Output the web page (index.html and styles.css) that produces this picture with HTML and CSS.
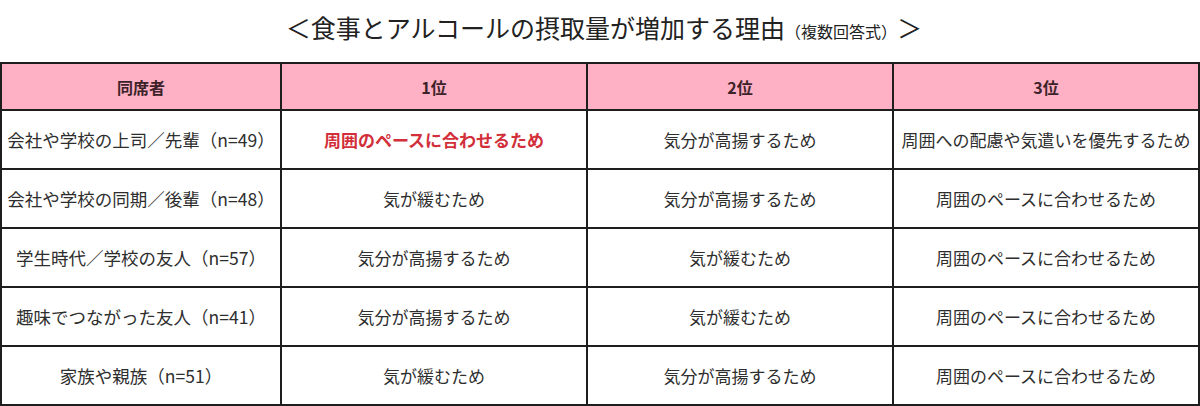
FILE: index.html
```html
<!DOCTYPE html>
<html lang="ja">
<head>
<meta charset="utf-8">
<link rel="stylesheet" href="styles.css">
</head>
<body>
<h1 class="title">＜食事とアルコールの摂取量が増加する理由<span class="sub">（複数回答式）</span>＞</h1>
<table class="grid">
  <colgroup>
    <col class="c0"><col class="c1"><col class="c1"><col class="c1">
  </colgroup>
  <thead>
    <tr><th>同席者</th><th>1位</th><th>2位</th><th>3位</th></tr>
  </thead>
  <tbody>
    <tr><td class="lbl">会社や学校の上司／先輩（n=49）</td><td class="hl">周囲のペースに合わせるため</td><td>気分が高揚するため</td><td>周囲への配慮や気遣いを優先するため</td></tr>
    <tr><td class="lbl">会社や学校の同期／後輩（n=48）</td><td>気が緩むため</td><td>気分が高揚するため</td><td>周囲のペースに合わせるため</td></tr>
    <tr><td class="lbl">学生時代／学校の友人（n=57）</td><td>気分が高揚するため</td><td>気が緩むため</td><td>周囲のペースに合わせるため</td></tr>
    <tr><td class="lbl">趣味でつながった友人（n=41）</td><td>気分が高揚するため</td><td>気が緩むため</td><td>周囲のペースに合わせるため</td></tr>
    <tr><td class="lbl">家族や親族（n=51）</td><td>気が緩むため</td><td>気分が高揚するため</td><td>周囲のペースに合わせるため</td></tr>
  </tbody>
</table>
</body>
</html>
```
FILE: styles.css
```css
html, body {
  margin: 0;
  padding: 0;
  background: #ffffff;
}
body {
  font-family: "Noto Sans CJK JP", "Noto Sans", sans-serif;
  color: #2b2b2b;
}
.title {
  margin: 0;
  height: 62px;
  box-sizing: border-box;
  padding-top: 10px;
  padding-left: 8px;
  font-size: 25px;
  line-height: 34px;
  font-weight: 400;
  text-align: center;
  color: #222;
}
.sub {
  font-size: 16px;
}
.grid {
  border-collapse: collapse;
  table-layout: fixed;
  width: 1199px;
  margin-left: 0;
}
.c0 { width: 280px; }
.c1 { width: 306px; }
.grid th, .grid td {
  border: 2px solid #1e1e1e;
  text-align: center;
  padding: 0;
  white-space: nowrap;
}
.grid th {
  background: #feb1c4;
  height: 45px;
  font-size: 16px;
  font-weight: 700;
  color: #3d2229;
}
.grid td {
  height: 57px;
  font-size: 17px;
  color: #2e2e2e;
}
.grid td.lbl {
  font-size: 17.5px;
}
.grid td.hl {
  color: #d22f3a;
  font-weight: 700;
}
```
